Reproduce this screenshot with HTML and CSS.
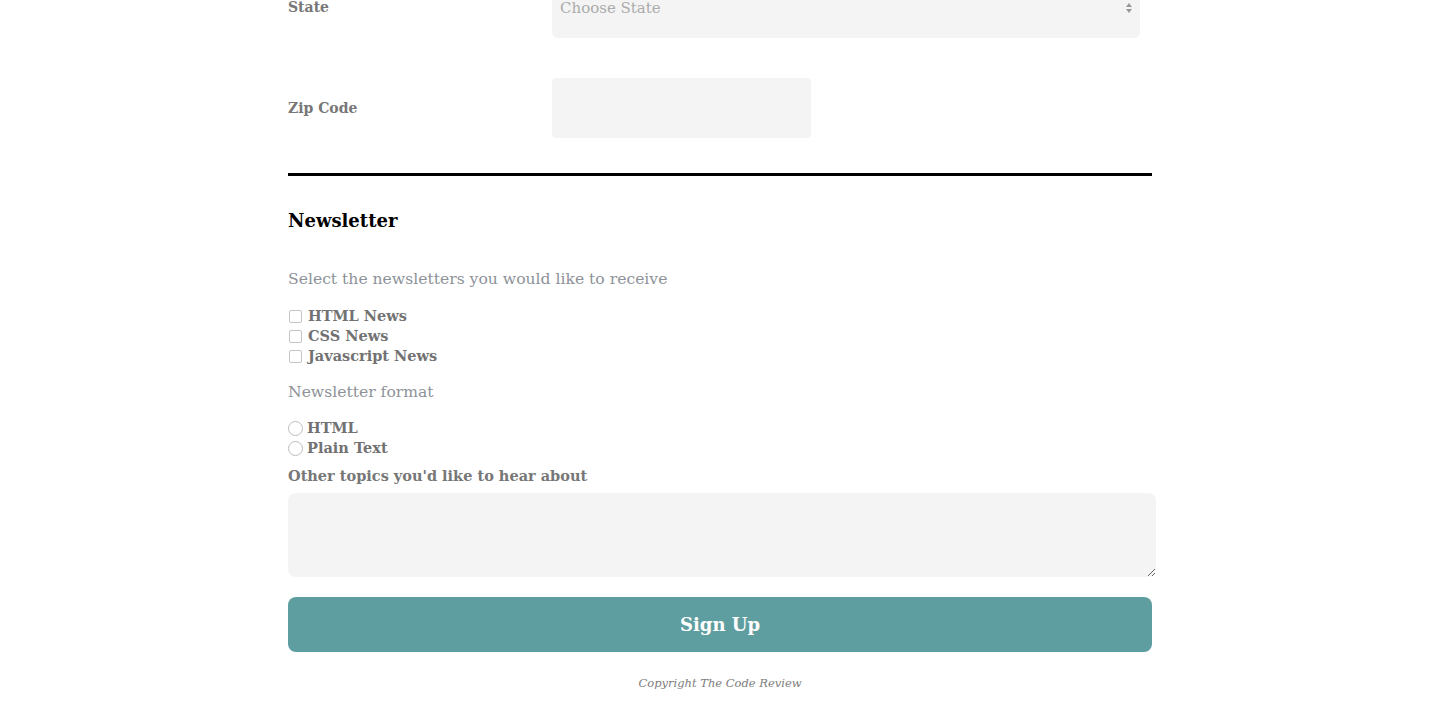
FILE: index.html
```html
<!DOCTYPE html>
<html lang="en">
<head>
<meta charset="utf-8">
<title>Sign Up</title>
<link rel="stylesheet" href="styles.css">
</head>
<body>
<main class="form">
  <div class="row row-state">
    <label class="label">State</label>
    <div class="select">
      <span class="placeholder">Choose State</span>
      <span class="arrows"><span class="up"></span><span class="down"></span></span>
    </div>
  </div>
  <div class="row row-zip">
    <label class="label">Zip Code</label>
    <div class="input zip"></div>
  </div>
  <hr class="rule">
  <h2 class="heading">Newsletter</h2>
  <p class="legend">Select the newsletters you would like to receive</p>
  <div class="options">
    <div class="option"><span class="box"></span>HTML News</div>
    <div class="option"><span class="box"></span>CSS News</div>
    <div class="option"><span class="box"></span>Javascript News</div>
  </div>
  <p class="legend legend-format">Newsletter format</p>
  <div class="options">
    <div class="option"><span class="radio"></span>HTML</div>
    <div class="option"><span class="radio"></span>Plain Text</div>
  </div>
  <label class="label topics-label">Other topics you'd like to hear about</label>
  <textarea class="textarea"></textarea>
  <button class="button">Sign Up</button>
  <p class="copyright">Copyright The Code Review</p>
</main>
</body>
</html>
```
FILE: styles.css
```css
html, body {
  margin: 0;
  padding: 0;
  background: #fff;
}
body {
  font-family: "DejaVu Serif", "Liberation Serif", serif;
  color: #707070;
}
.form {
  width: 864px;
  margin: 0 auto;
  display: flex;
  flex-direction: column;
}
.row {
  display: flex;
  align-items: center;
}
.row-state {
  margin-top: -22px;
}
.row-zip {
  margin-top: 40px;
}
.label {
  width: 264px;
  font-size: 14px;
  font-weight: bold;
  color: #777;
}
.row-state .label {
  margin-top: -3px;
}
.select {
  width: 588px;
  height: 60px;
  box-sizing: border-box;
  background: #f4f4f4;
  border-radius: 6px;
  display: flex;
  align-items: center;
  justify-content: space-between;
  padding: 0 8px 0 8px;
}
.placeholder {
  color: #ababab;
  font-size: 15px;
}
.arrows {
  display: flex;
  flex-direction: column;
  gap: 2px;
}
.up, .down {
  width: 0;
  height: 0;
  border-left: 3.5px solid transparent;
  border-right: 3.5px solid transparent;
}
.up { border-bottom: 4px solid #999; }
.down { border-top: 4px solid #999; }
.input {
  height: 60px;
  background: #f4f4f4;
  border-radius: 4px;
}
.zip {
  width: 259px;
}
.rule {
  margin: 35px 0 0;
  border: 0;
  height: 3px;
  background: #000;
}
.heading {
  margin: 33px 0 0;
  font-size: 18px;
  font-weight: bold;
  color: #000;
  line-height: 24px;
}
.legend {
  margin: 34px 0 0;
  font-size: 15.6px;
  color: #8d9298;
  line-height: 24px;
}
.options {
  margin-top: 14px;
  display: flex;
  flex-direction: column;
}
.option {
  display: flex;
  align-items: center;
  height: 20px;
  font-size: 14.5px;
  font-weight: bold;
  color: #727272;
}
.box {
  width: 11px;
  height: 11px;
  border: 1px solid #c4c4c4;
  border-radius: 2px;
  margin: 2px 6px 0 1px;
  background: #fff;
}
.radio {
  width: 15px;
  height: 15px;
  border: 1px solid #bdbdbd;
  border-radius: 50%;
  margin: 3px 4px 0 0;
  box-sizing: border-box;
}
.legend-format {
  margin-top: 15px;
}
.legend-format + .options {
  margin-top: 13px;
}
.topics-label {
  width: auto;
  margin-top: 9px;
  line-height: 20px;
  font-size: 14.5px;
}
.textarea {
  display: block;
  margin-top: 7px;
  width: 868px;
  height: 84px;
  box-sizing: border-box;
  border: 0;
  background: #f4f4f4;
  border-radius: 8px;
  resize: vertical;
  font-family: inherit;
}
.button {
  margin-top: 20px;
  height: 55px;
  border: 0;
  border-radius: 8px;
  background: #5f9ea0;
  color: #fff;
  font-family: inherit;
  font-size: 18px;
  font-weight: bold;
}
.copyright {
  margin: 24px 0 0;
  text-align: center;
  font-style: italic;
  font-size: 11.5px;
  color: #7d7d7d;
}
```
